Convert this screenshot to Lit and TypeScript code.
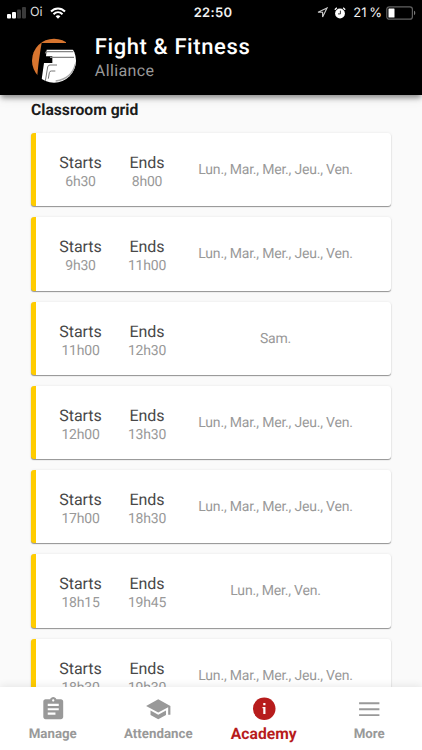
import { LitElement, html, svg, css } from "lit";
import { customElement } from "lit/decorators.js";

interface Slot { start: string; end: string; days: string; }

const WEEK = "Lun., Mar., Mer., Jeu., Ven.";
const SLOTS: Slot[] = [
  { start: "6h30", end: "8h00", days: WEEK },
  { start: "9h30", end: "11h00", days: WEEK },
  { start: "11h00", end: "12h30", days: "Sam." },
  { start: "12h00", end: "13h30", days: WEEK },
  { start: "17h00", end: "18h30", days: WEEK },
  { start: "18h15", end: "19h45", days: "Lun., Mer., Ven." },
  { start: "18h30", end: "19h30", days: WEEK },
];

const TABS = [
  { label: "Manage", icon: svg`<path d="M19 3h-4.180C14.400 1.840 13.300 1 12 1c-1.300 0-2.400.84-2.820 2H5c-1.100 0-2 .9-2 2v14c0 1.100.9 2 2 2h14c1.100 0 2-.9 2-2V5c0-1.100-.9-2-2-2zm-7 0c.55 0 1 .45 1 1s-.45 1-1 1-1-.45-1-1 .45-1 1-1zm2 14H7v-2h7v2zm3-4H7v-2h10v2zm0-4H7V7h10v2z"/>` },
  { label: "Attendance", icon: svg`<path d="M5 13.180v4L12 21l7-3.820v-4L12 17l-7-3.820zM12 3L1 9l11 6 9-4.910V17h2V9L12 3z"/>` },
  { label: "Academy", active: true, icon: svg`<circle cx="12" cy="11.500" r="10.200"/><path d="M11.100 6.400h2v2h-2zM10.400 9.900h2.700v6.300h-2v-5.200h-.7z" fill="#fff"/>` },
  { label: "More", icon: svg`<path d="M2.800 5.700h18.400v1.700H2.800zM2.800 11.100h18.400v1.700H2.800zM2.800 16.500h18.400v1.700H2.800z"/>` },
];

@customElement("status-bar")
class StatusBar extends LitElement {
  static styles = css`
    :host { display: grid; grid-template-columns: 1fr auto 1fr; height: 24px; align-items: center; color: #f2f2f2; font-size: 13px; }
    .left, .right { display: flex; align-items: center; }
    .left { padding-left: 7px; }
    .right { justify-content: flex-end; padding-right: 6px; }
    .time { font: 600 13px/24px Inter, sans-serif; letter-spacing: 0.3px; width: 40px; text-align: center; padding-left: 4px; }
    .carrier { font: 400 12.500px/25px Inter, sans-serif; margin: 0 7px 0 4px; color: #ddd; }
    .pct { font: 400 13px/24px Inter, sans-serif; margin: 0 4px 0 7px; word-spacing: -1px; }
    .arrow { margin-right: 6px; }
    svg { display: block; }
  `;
  render() {
    return html`
      <div class="left">
        <svg width="19" height="12" viewBox="0 0 19 12">
          <rect x="0" y="7" width="4" height="4.500" rx="1" fill="#fff"/>
          <rect x="5" y="5" width="4" height="6.500" rx="1" fill="#fff"/>
          <rect x="10" y="2.500" width="4" height="9" rx="1" fill="#3a3a3a"/>
          <rect x="15" y="0" width="4" height="11.500" rx="1" fill="#3a3a3a"/>
        </svg>
        <span class="carrier">Oi</span>
        <svg width="16" height="12" viewBox="0 0 16 12" fill="none" stroke="#fff" stroke-width="2">
          <path d="M1 4.500C5 .4 11 .4 15 4.500M3.500 7.200c2.600-2.500 6.400-2.500 9 0"/>
          <path d="M5.600 9.200c1.500-1.300 3.300-1.300 4.800 0L8 11.700z" fill="#fff" stroke="none"/>
        </svg>
      </div>
      <div class="time">22:50</div>
      <div class="right">
        <svg class="arrow" width="11" height="11" viewBox="0 0 11 11" fill="none" stroke="#ccc" stroke-width="1.100">
          <path d="M10 1L1 5.300h4.600V10z"/>
        </svg>
        <svg width="12" height="12" viewBox="0 0 12 12">
          <circle cx="6" cy="6.500" r="4.900" fill="#fff"/>
          <path d="M.8 2.700L2.800.8M11.200 2.700L9.200.8" stroke="#fff" stroke-width="1.300"/>
          <path d="M6.400 3.600v3.300H4" fill="none" stroke="#222" stroke-width=".9"/>
        </svg>
        <span class="pct">21 %</span>
        <svg width="30" height="14" viewBox="0 0 30 14">
          <rect x=".8" y=".8" width="25.600" height="12.400" rx="2.500" fill="none" stroke="#626262" stroke-width="1.200"/>
          <rect x="2.500" y="2.500" width="6" height="9" rx=".5" fill="#fff"/>
          <path d="M28 4.800c1.700.6 1.700 3.800 0 4.400z" fill="#777"/>
        </svg>
      </div>`;
  }
}

@customElement("academy-header")
class AcademyHeader extends LitElement {
  static styles = css`
    :host { display: block; height: 94.500px; background: #000; box-shadow: 0 4px 5px -1px rgba(0,0,0,.38), 0 2px 12px rgba(0,0,0,.1); }
    .brand { display: flex; padding: 11px 0 0 30px; }
    .logo { width: 48px; height: 48px; margin: 1px 16.800px 0 0; display: block; }
    h1 { margin: 0; padding-top: 1px; font-size: 22px; line-height: 24.500px; font-weight: 500; letter-spacing: 0.6px; color: #fff; }
    p { margin: 0; font-size: 16px; line-height: 19px; letter-spacing: 0.4px; color: #999; }
  `;
  render() {
    return html`
      <status-bar></status-bar>
      <div class="brand">
        <svg class="logo" viewBox="0 0 144 144">
          <defs><clipPath id="disc"><circle cx="72" cy="74" r="66"/></clipPath></defs>
          <g clip-path="url(#disc)">
            <path d="M0 0H108V21H35C30 50 26 75 22 118H0z" fill="#d8752f"/>
            <path d="M50 41H144V144H33L42 81H67V61H48z" fill="#fff"/>
            <path d="M46 52q1-5 7-5H130M60 64H132" fill="none" stroke="#858585" stroke-width="3.500"/>
            <path d="M81 87H60q-6 0-7 6l-7 42M76 105H64q-5 0-6 5l-3 18" fill="none" stroke="#777" stroke-width="3"/>
            <path d="M136 84C130 112 108 130 77 135" fill="none" stroke="#aaa" stroke-width="4"/>
          </g>
        </svg>
        <div><h1>Fight &amp; Fitness</h1><p>Alliance</p></div>
      </div>`;
  }
}

@customElement("class-card")
class ClassCard extends LitElement {
  static properties = { slotData: { attribute: false } };
  declare slotData: Slot;
  static styles = css`
    :host { display: flex; box-sizing: border-box; height: 73.300px; padding: 20px 0 0 16px; border-left: 5.500px solid #fc0; border-radius: 3px; background: #fff; box-shadow: 0 1px 1px rgba(0,0,0,.4), 0 0 3px rgba(0,0,0,.08); }
    .col { width: 57px; margin-right: 9.500px; text-align: center; }
    .label { font-size: 16px; line-height: 20px; color: #484848; letter-spacing: -0.05px; }
    .hour { font-size: 14px; line-height: 18px; color: #999; letter-spacing: -0.2px; }
    .days { width: 181px; text-align: center; font-size: 14px; line-height: 34px; color: #999; letter-spacing: -0.2px; }
  `;
  render() {
    const s = this.slotData;
    return html`
      <div class="col"><div class="label">Starts</div><div class="hour">${s.start}</div></div>
      <div class="col"><div class="label">Ends</div><div class="hour">${s.end}</div></div>
      <div class="days">${s.days}</div>`;
  }
}

@customElement("tab-bar")
class TabBar extends LitElement {
  static styles = css`
    :host { display: grid; grid-template-columns: repeat(4, 1fr); height: 63px; background: #fff; box-shadow: 0 -1px 8px rgba(0,0,0,.09); }
    .tab { display: flex; flex-direction: column; align-items: center; padding-top: 8.500px; color: #999; font-size: 13.300px; font-weight: 700; }
    .tab span { line-height: 20px; margin-top: 3px; }
    .active { color: #b71c1c; font-size: 15.700px; }
    .active span { margin-top: 2px; }
    svg { width: 26.500px; height: 26.500px; fill: currentColor; display: block; }
  `;
  render() {
    return TABS.map(t => html`<div class="tab ${t.active ? "active" : ""}"><svg viewBox="0 0 24 24">${t.icon}</svg><span>${t.label}</span></div>`);
  }
}

@customElement("app-root")
class AppRoot extends LitElement {
  static styles = css`
    :host { display: flex; flex-direction: column; height: 750px; overflow: hidden; background: #fafafa; font-family: Roboto, sans-serif; text-rendering: geometricPrecision; }
    academy-header, tab-bar { position: relative; z-index: 1; flex: none; }
    main { flex: 1; min-height: 0; overflow: hidden; padding: 4.500px 31px 0; }
    h2 { margin: 0 0 12.500px; font-size: 15.700px; line-height: 21.500px; font-weight: 700; color: #1c1c1c; }
    .list { display: flex; flex-direction: column; gap: 11px; }
  `;
  render() {
    return html`
      <academy-header></academy-header>
      <main>
        <h2>Classroom grid</h2>
        <div class="list">${SLOTS.map(s => html`<class-card .slotData=${s}></class-card>`)}</div>
      </main>
      <tab-bar></tab-bar>`;
  }
}
